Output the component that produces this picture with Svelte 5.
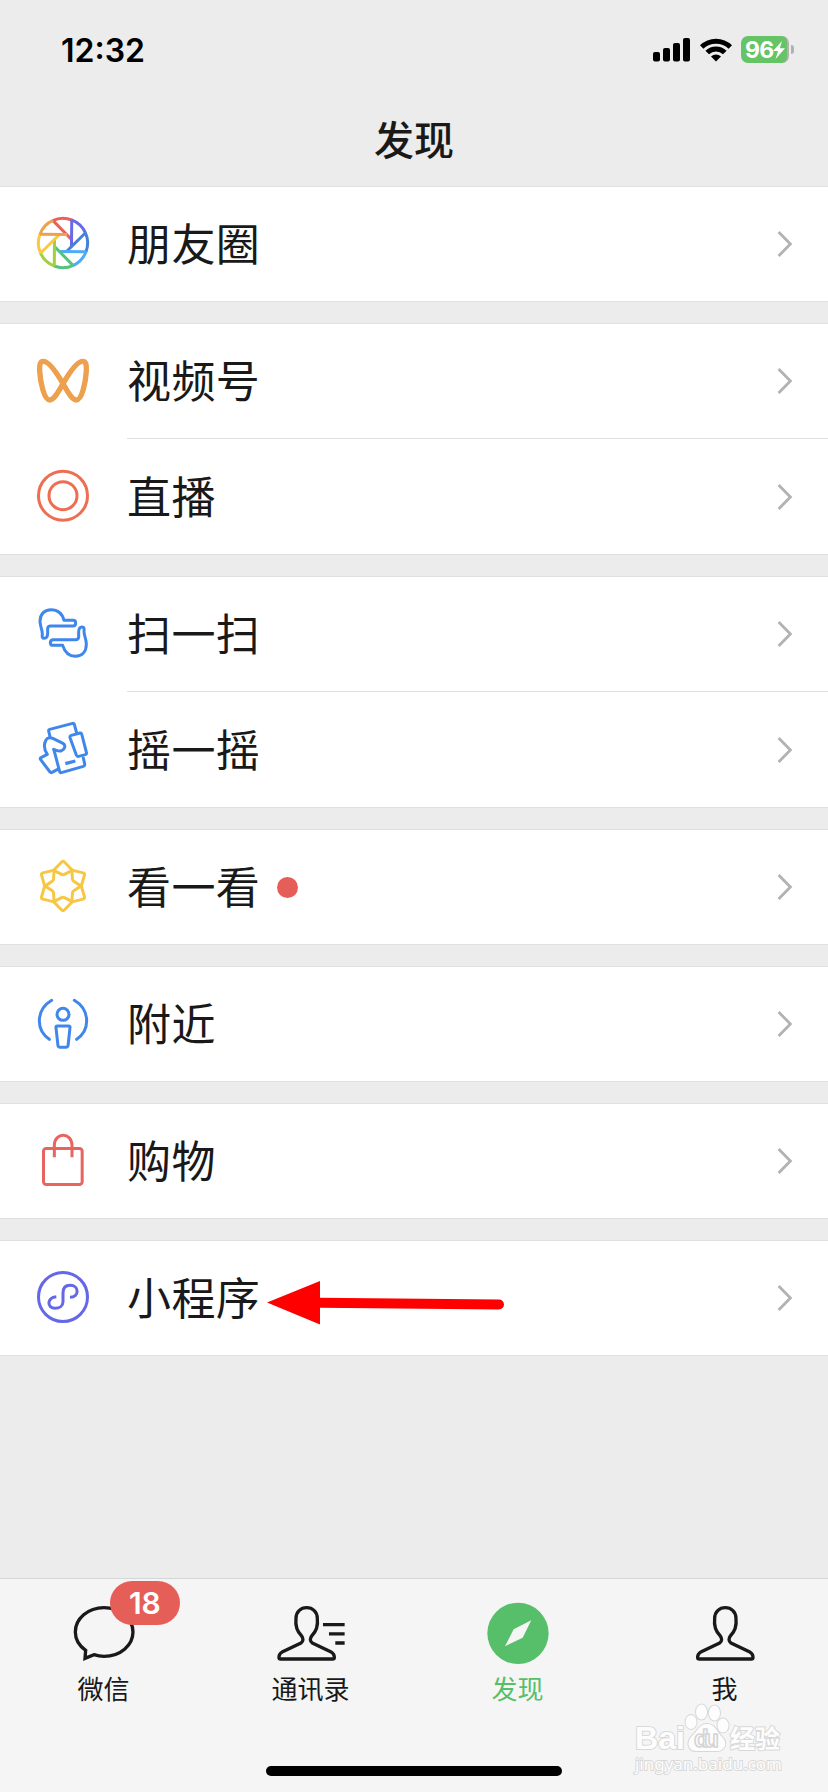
<script>
  const groups = [
    [{ icon: 'moments', label: '朋友圈' }],
    [{ icon: 'channels', label: '视频号' }, { icon: 'live', label: '直播' }],
    [{ icon: 'scan', label: '扫一扫' }, { icon: 'shake', label: '摇一摇' }],
    [{ icon: 'look', label: '看一看', dot: true }],
    [{ icon: 'nearby', label: '附近' }],
    [{ icon: 'shop', label: '购物' }],
    [{ icon: 'mini', label: '小程序', arrow: true }]
  ];

  const tabs = [
    { icon: 'chat', label: '微信', badge: 18 },
    { icon: 'contacts', label: '通讯录' },
    { icon: 'compass', label: '发现', active: true },
    { icon: 'me', label: '我' }
  ];

  // shutter blades, clockwise from the top
  const blades = ['#e8605a', '#6b68e8', '#4382d6', '#4dabf7', '#55c380', '#a0d13c', '#f7c945', '#eda04e'];
  const person = 'M87 4C105 4 119 17 119 36C122 62 115 76 102 89C97 96 96 105 104 110L159 136C167 141 170 145 170 151V154Q170 158 165 158H9Q4 158 4 154V151C4 145 7 141 15 136L70 110C78 105 77 96 72 89C59 76 52 62 55 36C55 17 69 4 87 4Z';
</script>

<div class="phone">
  <div class="status-bar">
    <span class="time">12:32</span>
    <div class="status-icons">
      <svg class="signal" viewBox="0 0 37 24">
        <rect x="0" y="14" width="7" height="9.5" rx="2" />
        <rect x="10" y="10" width="7" height="13.5" rx="2" />
        <rect x="20" y="5" width="7" height="18.5" rx="2" />
        <rect x="30" y="0" width="7" height="23.5" rx="2" />
      </svg>
      <svg class="wifi" viewBox="0 0 32 24">
        <path d="M0 7.2A23 23 0 0 1 32 7.2L28.6 10.8A18 18 0 0 0 3.4 10.8Z" />
        <path d="M5.4 12.7A15.4 15.4 0 0 1 26.6 12.7L23 16.2A10.2 10.2 0 0 0 9 16.2Z" />
        <path d="M11 18.4A7.4 7.4 0 0 1 21 18.4L16 23.6Z" />
      </svg>
      <div class="battery">
        <span>96</span>
        <svg viewBox="0 0 12 18"><path d="M9 0L0 10H5L2.6 18L12 7.2H6.8Z" fill="#fff" /></svg>
      </div>
      <i class="battery-cap"></i>
    </div>
  </div>

  <header>发现</header>

  <main>
    {#each groups as group}
      <section class="group">
        {#each group as item}
          <div class="row">
            <svg class="icon" viewBox="0 0 162 162" fill="none" stroke-width="9" stroke-linecap="round" stroke-linejoin="round">
              {#if item.icon === 'moments'}
                <g transform="translate(81 78)" stroke-linecap="butt">
                  {#each blades as color, i}
                    <g transform="rotate({i * 45})" stroke={color}>
                      <path d="M-30 -67L27 -9" />
                      <path d="M-31 -67A74 74 0 0 1 26.5 -69" />
                    </g>
                  {/each}
                </g>
              {:else if item.icon === 'channels'}
                <path transform="translate(0 5)" stroke="#eda04e" stroke-width="16" d="M81 84C66 58 40 17 22 17C12 17 10 27 11 46C13 79 24 133 41 133C55 133 68 106 81 84C96 58 122 17 140 17C150 17 152 27 151 46C149 79 138 133 121 133C107 133 94 106 81 84Z" />
              {:else if item.icon === 'live'}
                <g stroke="#ee6e52">
                  <circle cx="81" cy="80" r="73.5" />
                  <circle cx="81" cy="80" r="42" />
                </g>
              {:else if item.icon === 'scan'}
                <g stroke="#3f87ea" transform="translate(0 -3)">
                  <path d="M25 97C18 97 18 92 19 84C19 70 12 61 12 46C12 25 25 11 45 11C65 11 79 23 84 43H111Q119 43 119 51Q119 60 111 60H43Q36 60 35 67V82C35 90 32 97 25 97Z" />
                  <path d="M138 63C145 63 145 68 144 76C144 90 151 99 151 114C151 137 138 151 118 151C98 151 86 137 80 118H52Q43 118 43 110Q43 101 52 101H119Q127 101 128 94V78C128 70 131 63 138 63Z" />
                </g>
              {:else if item.icon === 'shake'}
                <g stroke="#3f87ea" transform="translate(0 2)">
                  <path d="M42 42L38 25Q37 21 41 20L110 2Q114 1 115 5L122 31" />
                  <path d="M54 82L71 147Q72 151 76 150L142 131Q147 129 146 124L142 106" />
                  <path d="M106 38L132 31Q136 30 137 34L151 88Q153 94 148 96L128 101Q123 102 121 97L102 45Q101 40 106 38Z" />
                  <path d="M65 140L48 149Q45 151 42 148L14 111Q11 107 15 105L34 95C25 82 23 65 30 52C34 43 44 44 52 48L81 62C90 67 87 80 77 84C70 88 62 83 53 80" />
                  <path stroke-linecap="butt" stroke-width="10" d="M88 123L118 115" />
                </g>
              {:else if item.icon === 'look'}
                <g stroke="#f7c643" transform="translate(81 78)">
                  {#each [0, 60, 120, 180, 240, 300] as angle}
                    <path transform="rotate({angle})" d="M-28 -47L-4 -72Q0 -76 4 -72L28 -47L4 -35Q0 -33 -4 -35Z" />
                  {/each}
                </g>
              {:else if item.icon === 'nearby'}
                <g stroke="#3f87ea" transform="translate(0 -8)">
                  <path d="M47 18C0 46 -2 106 40 135M115 18C162 46 164 106 122 135" />
                  <circle cx="81" cy="60" r="18" />
                  <path d="M64 95H98Q103 95 102 100L96 155Q95 159 91 159H71Q67 159 66 155L60 100Q59 95 64 95Z" />
                </g>
              {:else if item.icon === 'shop'}
                <g stroke="#e8645f">
                  <rect x="22.500" y="43.500" width="116" height="108" rx="8" />
                  <path stroke-linecap="butt" d="M55 70V34C55 -6 108 -6 108 34V70" />
                </g>
              {:else}
                <g stroke="#6467e8">
                  <circle cx="81" cy="78" r="73.5" />
                  <path stroke-linecap="butt" d="M61 77C31 80 33 112 57 112C70 112 81 105 81 92V66C81 49 91 43 102 43C130 43 131 78 102 79" />
                </g>
              {/if}
            </svg>
            <div class="cell">
              <span class="label">{item.label}</span>
              {#if item.dot}
                <i class="dot"></i>
              {/if}
              <svg class="chevron" viewBox="0 0 16 28"><path d="M1.6 2L13.4 14L1.6 26" /></svg>
            </div>
            {#if item.arrow}
              <svg class="arrow" viewBox="0 0 238 44">
                <path fill="#f00" d="M0 21.5L53 0V16.8L232 18.5A5 5 0 0 1 232 28.5L53 26.8V43.5Z" />
              </svg>
            {/if}
          </div>
        {/each}
      </section>
    {/each}
  </main>

  <nav>
    {#each tabs as tab}
      <div class="tab" class:active={tab.active}>
        <div class="tab-icon">
          {#if tab.icon === 'chat'}
            <svg viewBox="0 0 184 186" fill="none" stroke="#191919" stroke-width="10">
              <path d="M38 145C18 131 7 112 7 90C7 50 45 17 93 17C142 17 180 50 180 90C180 130 142 163 93 163C82 163 72 161 63 158L36 169Z" />
            </svg>
          {:else if tab.icon === 'compass'}
            <svg viewBox="0 0 184 186">
              <circle cx="93" cy="94" r="92" fill="#57bf6a" />
              <path d="M133 55L80 82L54 133L107 107Z" fill="#f5f5f5" />
            </svg>
          {:else}
            <svg viewBox="0 0 184 186" fill="none" stroke="#191919" stroke-width="10">
              <path transform={tab.icon === 'me' ? 'translate(7 13)' : 'translate(-7 13)'} d={person} />
              {#if tab.icon === 'contacts'}
                <path d="M129 68H194M147 95.500H194M166 123H194" />
              {/if}
            </svg>
          {/if}
          {#if tab.badge}
            <span class="badge">{tab.badge}</span>
          {/if}
        </div>
        <span class="tab-label">{tab.label}</span>
      </div>
    {/each}
  </nav>

  <div class="watermark">
    <svg viewBox="0 0 156 76">
      <g class="outlined">
        <text class="bai" x="3" y="49" textLength="50" lengthAdjust="spacingAndGlyphs">Bai</text>
        <ellipse cx="59" cy="22" rx="5.5" ry="7" />
        <ellipse cx="69.5" cy="12" rx="5.5" ry="7.5" />
        <ellipse cx="82.5" cy="13" rx="5.5" ry="7.5" />
        <ellipse cx="91" cy="25.5" rx="5.5" ry="7" />
        <path d="M75 24C83 24 85 32 90 37C96 43 93 51 85 51H64C56 51 54 42 60 36C65 32 67 24 75 24Z" />
        <text class="jing" x="98" y="48" textLength="50">经验</text>
        <text class="url" x="3" y="70" textLength="147">jingyan.baidu.com</text>
      </g>
      <text class="du" x="62" y="47" textLength="25">du</text>
    </svg>
  </div>
  <div class="home-indicator"></div>
</div>

<style>
  :global(body) {
    margin: 0;
    background: #ededed;
  }

  .phone {
    position: relative;
    display: flex;
    flex-direction: column;
    width: 828px;
    height: 1792px;
    overflow: hidden;
    background: #ececec;
    color: #191919;
    font-family: 'Noto Sans CJK SC', sans-serif;
  }

  .status-bar {
    display: flex;
    justify-content: space-between;
    align-items: center;
    height: 100px;
    box-sizing: border-box;
    padding: 0 34px 0 61px;
    color: #000;
    font-family: Inter, sans-serif;
  }

  .time {
    font-size: 32px;
    font-weight: 600;
  }

  .status-icons {
    display: flex;
    align-items: center;
    margin-top: -1px;
  }

  .signal {
    width: 37px;
    height: 24px;
    margin-right: 10px;
  }

  .wifi {
    width: 32px;
    height: 24px;
    margin-right: 9px;
  }

  .battery {
    display: flex;
    align-items: center;
    box-sizing: border-box;
    width: 48px;
    height: 27px;
    padding-left: 4px;
    border-right: 2px solid #b1b1b1;
    border-radius: 7px;
    background: #64c466;
    color: #fff;
    font-size: 23px;
    font-weight: 700;
    letter-spacing: -0.8px;
  }

  .battery svg {
    width: 12px;
    height: 18px;
  }

  .battery-cap {
    width: 3px;
    height: 9px;
    margin-left: 2px;
    border-radius: 0 4px 4px 0;
    background: #b1b1b1;
  }

  header {
    height: 86px;
    line-height: 76px;
    text-align: center;
    font-size: 40px;
    font-weight: 500;
  }

  main {
    display: flex;
    flex: 1;
    flex-direction: column;
    gap: 21px;
  }

  .group {
    border-top: 1px solid #e0e0e0;
    border-bottom: 1px solid #e0e0e0;
    background: #fff;
  }

  .row {
    position: relative;
    display: flex;
    align-items: center;
    height: 114px;
    padding-left: 36px;
  }

  .row + .row {
    height: 116px;
  }

  .row + .row .cell {
    border-top: 1px solid #e0e0e0;
  }

  .icon {
    width: 54px;
    height: 54px;
    margin-right: 37px;
    overflow: visible;
  }

  .cell {
    display: flex;
    flex: 1;
    align-items: center;
    align-self: stretch;
    padding-right: 35px;
  }

  .label {
    padding-bottom: 4px;
    font-size: 44px;
    line-height: 60px;
    letter-spacing: 0.4px;
  }

  .dot {
    width: 21px;
    height: 21px;
    margin-left: 17px;
    border-radius: 50%;
    background: #e65e58;
  }

  .chevron {
    width: 16px;
    height: 28px;
    margin-left: auto;
    fill: none;
    stroke: #b2b2b2;
    stroke-width: 2.8;
  }

  .arrow {
    position: absolute;
    top: 40px;
    left: 267px;
    width: 238px;
    height: 44px;
  }

  nav {
    display: flex;
    height: 213px;
    border-top: 1px solid #d5d5d5;
    background: #f5f5f5;
  }

  .tab {
    display: flex;
    flex: 1;
    flex-direction: column;
    align-items: center;
    padding-top: 23px;
  }

  .tab-icon {
    position: relative;
    height: 62px;
  }

  .tab-icon svg {
    display: block;
    width: 61.3px;
    height: 62px;
    overflow: visible;
  }

  .badge {
    position: absolute;
    top: -21px;
    left: 37px;
    width: 70px;
    height: 44px;
    border-radius: 22px;
    background: #e65e58;
    color: #fff;
    font: 600 30px/44px Inter, sans-serif;
    text-align: center;
  }

  .tab-label {
    margin-top: 5px;
    font-size: 26px;
    line-height: 38px;
  }

  .active {
    color: #57bf6a;
  }

  .watermark {
    position: absolute;
    left: 632px;
    top: 1700px;
    width: 156px;
    height: 76px;
  }

  .watermark svg {
    display: block;
    width: 156px;
    height: 76px;
  }

  .outlined {
    fill: #fdfdfd;
    stroke: #d8d8d8;
    stroke-width: 2px;
    paint-order: stroke;
  }

  .bai {
    font: 700 32px 'Liberation Sans', sans-serif;
  }

  .du {
    fill: #fdfdfd;
    stroke: #d4d4d4;
    stroke-width: 1.6px;
    font: 700 24px 'Liberation Sans', sans-serif;
  }

  .jing {
    font: 700 25px 'Noto Sans CJK SC', sans-serif;
  }

  .url {
    font: 400 17px 'Noto Sans', sans-serif;
    stroke-width: 1.8px;
  }

  .home-indicator {
    position: absolute;
    left: 266px;
    top: 1766px;
    width: 296px;
    height: 10px;
    border-radius: 5px;
    background: #000;
  }
</style>
